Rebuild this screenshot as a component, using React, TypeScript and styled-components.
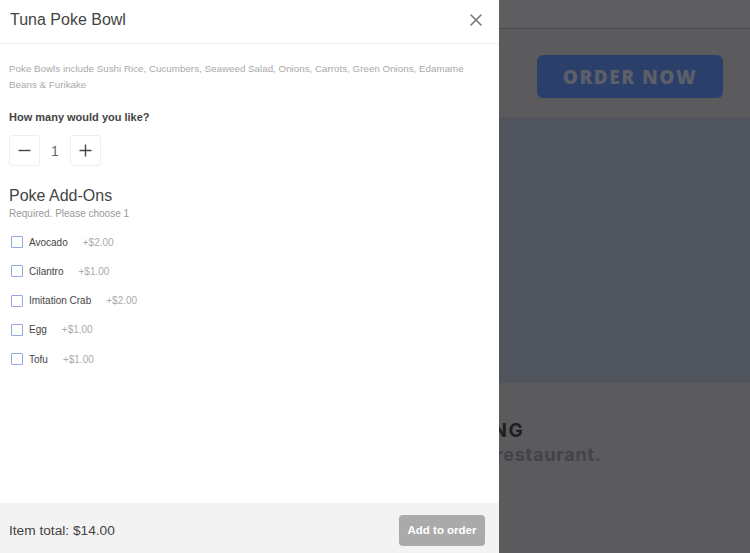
import React, { useState } from 'react';
import styled, { createGlobalStyle } from 'styled-components';

const GlobalStyle = createGlobalStyle`
    html, body {
        margin: 0;
        padding: 0;
        height: 100%;
        overflow: hidden;
    }
    body {
        font-family: "Liberation Sans", Arial, sans-serif;
    }
    #root {
        height: 100%;
    }
`;

const addOns = [
    { name: 'Avocado', price: 2 },
    { name: 'Cilantro', price: 1 },
    { name: 'Imitation Crab', price: 2 },
    { name: 'Egg', price: 1 },
    { name: 'Tofu', price: 1 },
];

// page behind the drawer, already dimmed by the backdrop
const Page = styled.div`
    height: 553px;
    display: flex;
    flex-direction: column;
    background: #5b5a5d;
`;

const TopBar = styled.div`
    height: 28px;
    border-bottom: 1px solid #4c4b4e;
    background: #5e5d60;
`;

const Hero = styled.div`
    height: 89px;
    display: flex;
    align-items: center;
    justify-content: flex-end;
    padding-right: 27px;
`;

const OrderButton = styled.div`
    width: 186px;
    height: 43px;
    margin-top: 6px;
    border-radius: 6px;
    background: #2b3f6b;
    color: #5d5f68;
    font-family: "Open Sans", sans-serif;
    font-weight: 800;
    font-size: 19px;
    letter-spacing: 1.5px;
    display: flex;
    align-items: center;
    justify-content: center;
`;

const Banner = styled.div`
    height: 265px;
    background: #50545d;
`;

const Promo = styled.div`
    padding: 36px 0 0 271px;
    display: flex;
    flex-direction: column;
    gap: 2px;
    font-family: "Inter", sans-serif;
    font-weight: 700;
`;

const PromoTitle = styled.div<{ $indent: number }>`
    margin-left: ${p => p.$indent}px;
    font-size: 19px;
    letter-spacing: 1.5px;
    color: #1f1e21;
`;

const PromoText = styled.div`
    font-size: 18px;
    letter-spacing: 0.8px;
    color: #444347;
`;

const Drawer = styled.div`
    position: fixed;
    top: 0;
    left: 0;
    bottom: 0;
    width: 499px;
    background: #fff;
    display: flex;
    flex-direction: column;
    color: #444;
`;

const Header = styled.div`
    height: 44px;
    flex: none;
    display: flex;
    align-items: center;
    justify-content: space-between;
    padding: 0 16px 4px 10px;
    box-sizing: border-box;
    border-bottom: 1px solid #efefef;
`;

const Title = styled.h1`
    margin: 0;
    font-size: 16px;
    font-weight: 400;
    color: #444;
`;

const CloseButton = styled.button`
    border: none;
    background: none;
    padding: 0;
    width: 14px;
    height: 14px;
    display: flex;
    color: #777;
    cursor: pointer;
`;

const Body = styled.div`
    flex: 1;
    padding: 17px 9px 0;
`;

const Description = styled.p`
    margin: 0;
    font-size: 9.8px;
    line-height: 16px;
    color: #aaa;
`;

const Question = styled.div`
    margin-top: 18px;
    font-size: 11px;
    font-weight: 700;
    color: #444;
`;

const Stepper = styled.div`
    margin-top: 12px;
    display: flex;
    align-items: center;
`;

const StepButton = styled.button`
    width: 31px;
    height: 31px;
    border: 1px solid #eee;
    border-radius: 3px;
    background: #fff;
    padding: 0;
    display: flex;
    align-items: center;
    justify-content: center;
    color: #444;
`;

const Count = styled.span`
    width: 30px;
    text-align: center;
    font-size: 14px;
    color: #666;
`;

const SectionTitle = styled.h2`
    margin: 21px 0 0;
    font-size: 16px;
    font-weight: 400;
    color: #444;
`;

const Hint = styled.div`
    margin-top: 3px;
    font-size: 10px;
    color: #999;
`;

const OptionList = styled.div`
    margin-top: 15px;
    display: flex;
    flex-direction: column;
    gap: 13.25px;
`;

const Option = styled.label`
    display: flex;
    align-items: center;
    height: 16px;
    padding-left: 2px;
    font-size: 10px;
`;

const Box = styled.span<{ $checked: boolean }>`
    width: 10px;
    height: 10px;
    border: 1px solid #93a8e0;
    border-radius: 1px;
    background: ${p => (p.$checked ? '#93a8e0' : '#fff')};
    margin-right: 6px;
`;

const OptionName = styled.span`
    color: #444;
    margin-right: 15px;
`;

const OptionPrice = styled.span`
    color: #aaa;
`;

const Footer = styled.div`
    height: 50px;
    flex: none;
    background: #f4f3f4;
    display: flex;
    align-items: center;
    justify-content: space-between;
    padding: 4px 14px 0 9px;
    box-sizing: border-box;
`;

const Total = styled.div`
    font-size: 13.7px;
    color: #444;
`;

const AddButton = styled.button`
    width: 86px;
    height: 31px;
    border: none;
    border-radius: 4px;
    background: #aaa;
    color: #fff;
    font-family: "Liberation Sans", Arial, sans-serif;
    font-weight: 700;
    font-size: 11.5px;
    padding: 0;
`;

export default function App() {
    const [qty, setQty] = useState(1);
    const [picked, setPicked] = useState<string | null>(null);
    const base = 14;
    const extra = addOns.find(a => a.name === picked)?.price ?? 0;

    return (
        <>
            <GlobalStyle />
            <Page>
                <TopBar />
                <Hero>
                    <OrderButton>ORDER NOW</OrderButton>
                </Hero>
                <Banner />
                <Promo>
                    <PromoTitle $indent={56}>ONLINE ORDERING</PromoTitle>
                    <PromoText>Order directly from our restaurant.</PromoText>
                </Promo>
            </Page>

            <Drawer>
                <Header>
                    <Title>Tuna Poke Bowl</Title>
                    <CloseButton aria-label="Close">
                        <svg width="14" height="14" viewBox="0 0 14 14">
                            <path d="M2 2 L12 12 M12 2 L2 12" stroke="currentColor" strokeWidth="1.6" strokeLinecap="round" />
                        </svg>
                    </CloseButton>
                </Header>

                <Body>
                    <Description>
                        Poke Bowls include Sushi Rice, Cucumbers, Seaweed Salad, Onions, Carrots, Green Onions, Edamame Beans &amp; Furikake
                    </Description>

                    <Question>How many would you like?</Question>
                    <Stepper>
                        <StepButton onClick={() => setQty(q => Math.max(1, q - 1))}>
                            <svg width="13" height="13" viewBox="0 0 13 13">
                                <path d="M0.5 6.5 H12.5" stroke="currentColor" strokeWidth="1.4" />
                            </svg>
                        </StepButton>
                        <Count>{qty}</Count>
                        <StepButton onClick={() => setQty(q => q + 1)}>
                            <svg width="13" height="13" viewBox="0 0 13 13">
                                <path d="M0.5 6.5 H12.5 M6.5 0.5 V12.5" stroke="currentColor" strokeWidth="1.4" />
                            </svg>
                        </StepButton>
                    </Stepper>

                    <SectionTitle>Poke Add-Ons</SectionTitle>
                    <Hint>Required. Please choose 1</Hint>
                    <OptionList>
                        {addOns.map(a => (
                            <Option key={a.name} onClick={() => setPicked(a.name)}>
                                <Box $checked={picked === a.name} />
                                <OptionName>{a.name}</OptionName>
                                <OptionPrice>+${a.price.toFixed(2)}</OptionPrice>
                            </Option>
                        ))}
                    </OptionList>
                </Body>

                <Footer>
                    <Total>Item total: ${((base + extra) * qty).toFixed(2)}</Total>
                    <AddButton>Add to order</AddButton>
                </Footer>
            </Drawer>
        </>
    );
}
